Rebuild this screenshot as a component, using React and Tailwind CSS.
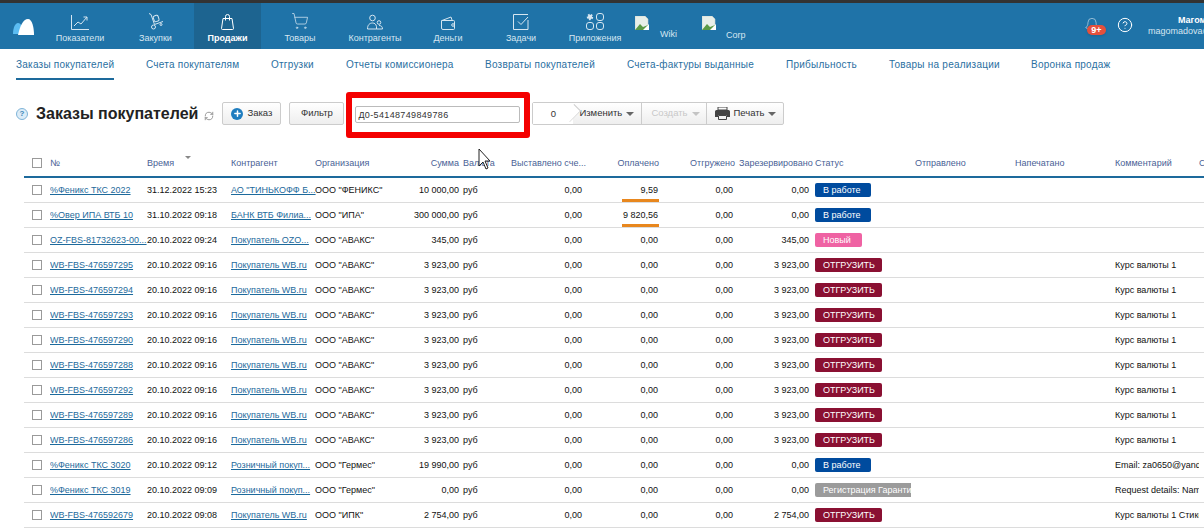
import React from 'react';
import { ShoppingCart, Bell, CircleHelp, Plus, RefreshCw } from 'lucide-react';

function LineChartIcon() {
    return (
        <svg width="18" height="15" viewBox="0 0 18 15" fill="none" stroke="currentColor" strokeWidth="1">
            <path d="M0.5 0v14.5H18" />
            <path d="M3 11l4-4 3 2 6-7" />
            <path d="M12.5 2H16v3.5" />
        </svg>
    );
}

function DollyIcon() {
    return (
        <svg width="16" height="17" viewBox="0 0 16 17" fill="none" stroke="currentColor" strokeWidth="1">
            <path d="M1 0.5l2 1 3.5 10" />
            <rect x="5.5" y="2.5" width="5" height="6" rx="1.5" transform="rotate(-18 8 5)" />
            <path d="M6.5 11.5l8.5-3" />
            <circle cx="5.5" cy="14" r="2" />
            <circle cx="13" cy="11.5" r="1" />
        </svg>
    );
}

function BagIcon() {
    return (
        <svg width="13" height="16" viewBox="0 0 13 16" fill="none" stroke="currentColor" strokeWidth="1">
            <path d="M2 4.500h9l1.500 10a1 1 0 0 1-1 1H1.500a1 1 0 0 1-1-1z" />
            <path d="M4.500 6.500V2.500a2 2 0 0 1 4 0v4" />
        </svg>
    );
}

function PeopleIcon() {
    return (
        <svg width="16" height="16" viewBox="0 0 16 16" fill="none" stroke="currentColor" strokeWidth="1">
            <circle cx="5.500" cy="4" r="2.800" />
            <path d="M0.500 15c0-4 2-6 5-6 2 0 3.500 1 4 3.500V15z" />
            <circle cx="12" cy="8.500" r="1.800" />
            <path d="M9.500 15h6c0-2-1-3.500-3.500-3.500" />
        </svg>
    );
}

function WalletIcon() {
    return (
        <svg width="15" height="14" viewBox="0 0 15 14" fill="none" stroke="currentColor" strokeWidth="1">
            <path d="M1 4.500h11.500a1 1 0 0 1 1 1v7a1 1 0 0 1-1 1h-10.500a1.500 1.500 0 0 1-1.500-1.500V4.500z" />
            <path d="M1 4.500L10 1l1 3" />
            <circle cx="12" cy="9" r="1.300" />
        </svg>
    );
}

function TaskIcon() {
    return (
        <svg width="16" height="16" viewBox="0 0 16 16" fill="none" stroke="currentColor" strokeWidth="1">
            <path d="M15 6v9.500H0.500V0.500H15" />
            <path d="M5 7.500l3 3 7-7.500" />
        </svg>
    );
}

function AppsIcon() {
    return (
        <svg width="18" height="17" viewBox="0 0 18 17" fill="none" stroke="currentColor" strokeWidth="1">
            <circle cx="4" cy="4" r="2.200" fill="currentColor" strokeWidth="2" strokeDasharray="1.500 1" />
            <rect x="10.500" y="0.500" width="7" height="7" rx="2.500" />
            <rect x="0.500" y="9.500" width="7" height="7" rx="2.500" />
            <rect x="10.500" y="9.500" width="7" height="7" rx="2.500" />
        </svg>
    );
}

function PrinterIcon() {
    return (
        <svg width="15" height="13" viewBox="0 0 15 13" className="text-[#444]">
            <path d="M3 0h9v3H3z" fill="none" stroke="currentColor" />
            <path d="M1.500 3h12a1.500 1.500 0 0 1 1.500 1.500V10h-3V8H3v2H0V4.500A1.500 1.500 0 0 1 1.500 3z" fill="currentColor" />
            <path d="M3.500 8.500h8v4h-8z" fill="none" stroke="currentColor" />
        </svg>
    );
}

function BrokenImage() {
    return (
        <svg width="14" height="14" viewBox="0 0 14 14">
            <path d="M0 0h10l3 3v11H0z" fill="#e8efe9" stroke="#c9d2cc" strokeWidth="0.6" />
            <path d="M0 14l5-6 3 3 5-2v5z" fill="#5b9a46" />
            <path d="M8 14l6-6v6z" fill="#fff" />
        </svg>
    );
}

function Logo() {
    return (
        <svg width="21" height="16" viewBox="0 0 21 16" className="mr-[9px]">
            <path d="M0 15c0-6 2-11 5-11s5 4 6 11H0z" fill="#5bbcf2" />
            <path d="M5 16c2-9 5-16 10-16 4 0 6 8 6 16z" fill="#fff" />
        </svg>
    );
}

const navItems = [
    { label: 'Показатели', w: 'w-[74px]', icon: <LineChartIcon /> },
    { label: 'Закупки', w: 'w-[77px]', icon: <DollyIcon /> },
    { label: 'Продажи', w: 'w-[67px]', icon: <BagIcon />, active: true },
    { label: 'Товары', w: 'w-[78px]', icon: <ShoppingCart size={18} strokeWidth={1} /> },
    { label: 'Контрагенты', w: 'w-[72px]', icon: <PeopleIcon /> },
    { label: 'Деньги', w: 'w-[74px]', icon: <WalletIcon /> },
    { label: 'Задачи', w: 'w-[72px]', icon: <TaskIcon /> },
    { label: 'Приложения', w: 'w-[76px]', icon: <AppsIcon /> },
];

const tabs = [
    ['Заказы покупателей', 'w-[130px]'],
    ['Счета покупателям', 'w-[125px]'],
    ['Отгрузки', 'w-[75px]'],
    ['Отчеты комиссионера', 'w-[139px]'],
    ['Возвраты покупателей', 'w-[142px]'],
    ['Счета-фактуры выданные', 'w-[159px]'],
    ['Прибыльность', 'w-[103px]'],
    ['Товары на реализации', 'w-[142px]'],
    ['Воронка продаж', 'w-[100px]'],
];

const badgeStyles = {
    work: 'w-[56px] bg-[#004b9e] rounded-[2px]',
    fresh: 'w-[47px] bg-[#ef62a3] rounded-[2px]',
    ship: 'w-[67px] bg-[#8a1032] rounded-[2px]',
    reg: 'w-[96px] bg-[#9b9b9b] rounded-l-[2px] overflow-hidden',
};

const wbRow = (num, money = '3 923,00', org = 'ООО "АВАКС"', time = '20.10.2022 09:16') => ({
    num, time, client: 'Покупатель WB.ru', org, sum: money, paid: '0,00', res: money,
    status: 'ОТГРУЗИТЬ', kind: 'ship', comment: 'Курс валюты 1',
});

const rows = [
    { num: '%Феникс ТКС 2022', time: '31.12.2022 15:23', client: 'АО "ТИНЬКОФФ Б...', org: 'ООО "ФЕНИКС"', sum: '10 000,00', paid: '9,59', bar: true, res: '0,00', status: 'В работе', kind: 'work' },
    { num: '%Овер ИПА ВТБ 10', time: '31.10.2022 09:18', client: 'БАНК ВТБ Филиа...', org: 'ООО "ИПА"', sum: '300 000,00', paid: '9 820,56', bar: true, res: '0,00', status: 'В работе', kind: 'work' },
    { num: 'OZ-FBS-81732623-00...', time: '20.10.2022 09:24', client: 'Покупатель OZO...', org: 'ООО "АВАКС"', sum: '345,00', paid: '0,00', res: '345,00', status: 'Новый', kind: 'fresh' },
    wbRow('WB-FBS-476597295'),
    wbRow('WB-FBS-476597294'),
    wbRow('WB-FBS-476597293'),
    wbRow('WB-FBS-476597290'),
    wbRow('WB-FBS-476597288'),
    wbRow('WB-FBS-476597292'),
    wbRow('WB-FBS-476597289'),
    wbRow('WB-FBS-476597286'),
    { num: '%Феникс ТКС 3020', time: '20.10.2022 09:12', client: 'Розничный покуп...', org: 'ООО "Гермес"', sum: '19 990,00', paid: '0,00', res: '0,00', status: 'В работе', kind: 'work', comment: 'Email: za0650@yandex.ru' },
    { num: '%Феникс ТКС 3019', time: '20.10.2022 09:09', client: 'Розничный покуп...', org: 'ООО "Гермес"', sum: '0,00', paid: '0,00', res: '0,00', status: 'Регистрация Гарантии', kind: 'reg', comment: 'Request details: Name' },
    { ...wbRow('WB-FBS-476592679', '2 754,00', 'ООО "ИПК"', '20.10.2022 09:08'), comment: 'Курс валюты 1 Стикер' },
];

const th = 'font-normal text-[#4a5f96] text-left p-0 whitespace-nowrap';

function Check() {
    return <span className="block w-[10px] h-[10px] border border-[#9a9a9a] bg-white" />;
}

function Caret({ light }) {
    return <span className={`w-0 h-0 border-x-[4px] border-x-transparent border-t-[4px] ${light ? 'border-t-[#c4c4c4]' : 'border-t-[#666]'}`} />;
}

function OrdersTable() {
    return (
        <table className="table-fixed border-collapse w-[1180px] ml-[24px] mt-[12px] text-[9px] leading-[14px] text-[#111]">
            <colgroup>
                <col className="w-[26px]" /><col className="w-[97px]" /><col className="w-[84px]" /><col className="w-[84px]" />
                <col className="w-[80px]" /><col className="w-[68px]" /><col className="w-[48px]" /><col className="w-[75px]" />
                <col className="w-[76px]" /><col className="w-[77px]" /><col className="w-[76px]" /><col className="w-[100px]" />
                <col className="w-[100px]" /><col className="w-[100px]" /><col className="w-[84px]" /><col />
            </colgroup>
            <thead>
                <tr className="h-[27px] border-b-[2px] border-[#1d6a9c]">
                    <th className="p-0 pl-[8px]"><Check /></th>
                    <th className={th}>№</th>
                    <th className={`${th} relative`}>
                        Время
                        <span className="absolute left-[38px] top-[6px] w-0 h-0 border-x-[3px] border-x-transparent border-t-[3px] border-t-[#888]" />
                    </th>
                    <th className={th}>Контрагент</th>
                    <th className={th}>Организация</th>
                    <th className={`${th} text-right pr-[4px]`}>Сумма</th>
                    <th className={th}>Валюта</th>
                    <th className={`${th} overflow-hidden`}>Выставлено сче...</th>
                    <th className={`${th} text-right pr-[3px]`}>Оплачено</th>
                    <th className={`${th} text-right pr-[4px]`}>Отгружено</th>
                    <th className={`${th} text-right pr-[4px]`}>Зарезервировано</th>
                    <th className={th}>Статус</th>
                    <th className={th}>Отправлено</th>
                    <th className={th}>Напечатано</th>
                    <th className={th}>Комментарий</th>
                    <th className={th}>С</th>
                </tr>
            </thead>
            <tbody>
                {rows.map(row => (
                    <tr key={row.num} className="h-[25px] border-b border-[#dcdcdc]">
                        <td className="p-0 pl-[8px]"><Check /></td>
                        <td className="p-0 overflow-hidden whitespace-nowrap"><span className="text-[#1d6a9c] underline">{row.num}</span></td>
                        <td className="p-0 whitespace-nowrap">{row.time}</td>
                        <td className="p-0 whitespace-nowrap"><span className="text-[#1d6a9c] underline">{row.client}</span></td>
                        <td className="p-0 whitespace-nowrap">{row.org}</td>
                        <td className="p-0 pr-[4px] text-right whitespace-nowrap">{row.sum}</td>
                        <td className="p-0">руб</td>
                        <td className="p-0 pr-[4px] text-right">0,00</td>
                        <td className="p-0 pr-[4px] text-right relative">
                            {row.paid}
                            {row.bar && <span className="absolute right-[3px] bottom-0 w-[37px] h-[3px] bg-[#e8871e]" />}
                        </td>
                        <td className="p-0 pr-[6px] text-right">0,00</td>
                        <td className="p-0 pr-[6px] text-right">{row.res}</td>
                        <td className="p-0">
                            <span className={`block h-[14px] pl-[8px] text-white whitespace-nowrap ${badgeStyles[row.kind]}`}>{row.status}</span>
                        </td>
                        <td className="p-0" />
                        <td className="p-0" />
                        <td className="p-0 overflow-hidden whitespace-nowrap">{row.comment}</td>
                        <td className="p-0" />
                    </tr>
                ))}
            </tbody>
        </table>
    );
}

export default function App() {
    return (
        <div className="relative w-[1204px] h-[530px] overflow-hidden bg-white font-['Liberation_Sans',Arial,sans-serif]">
            <div className="h-[3px] bg-[#333333]" />

            {/* top menu */}
            <div className="h-[46px] bg-[#1f73a8] flex items-stretch pl-[13px] text-[#d6e6f1]">
                <div className="flex items-center pt-[1px]"><Logo /></div>
                <div className="flex text-[9px] leading-[12px]">
                    {navItems.map(item => (
                        <div
                            key={item.label}
                            className={`${item.w} flex flex-col items-center justify-end pb-[5px] ${item.active ? 'bg-[#1d6490] text-white font-bold' : ''}`}
                        >
                            <span className="h-[22px] mb-[2px] flex items-end">{item.icon}</span>
                            {item.label}
                        </div>
                    ))}
                </div>
                <div className="flex text-[9px] ml-[2px]">
                    <div className="w-[67px] flex items-start pt-[13px]">
                        <BrokenImage />
                        <span className="ml-[11px] mt-[12px]">Wiki</span>
                    </div>
                    <div className="flex items-start pt-[13px]">
                        <BrokenImage />
                        <span className="ml-[10px] mt-[13px]">Corp</span>
                    </div>
                </div>
                <div className="ml-auto flex items-center relative w-[120px] shrink-0">
                    <div className="relative w-[33px] -mt-[3px] text-[#c7dcea]">
                        <Bell size={16} strokeWidth={1} />
                        <span className="absolute left-[3px] top-[8px] w-[19px] h-[10px] rounded-full bg-[#e5503c] text-white text-[9px] leading-[10px] font-bold text-center shadow">9+</span>
                    </div>
                    <CircleHelp size={16} strokeWidth={1.5} className="text-white -mt-[3px]" />
                    <div className="ml-[15px] w-[56px] overflow-hidden text-[9px] leading-[11px] text-white whitespace-nowrap">
                        <div className="font-bold pl-[30px]">Магомадова</div>
                        <div className="text-[#d6e6f1]">magomadova@mail.ru</div>
                    </div>
                </div>
            </div>

            {/* sub menu */}
            <div className="h-[31px] flex pl-[16px] text-[10px] tracking-[0.23px] text-[#2a6f9f]">
                {tabs.map(([label, w], i) => (
                    <div key={label} className={`${w} shrink-0 pt-[8px]`}>
                        <span className={`inline-block h-[23px] whitespace-nowrap ${i === 0 ? 'border-b-[2px] border-[#1d6a9c]' : ''}`}>{label}</span>
                    </div>
                ))}
            </div>

            {/* toolbar */}
            <div className="flex items-center h-[46px] mt-[12px] pl-[16px] text-[9.5px] text-[#333]">
                <span className="w-[12px] h-[12px] rounded-full border border-[#7fb4d8] bg-[#dcecf7] text-[#3d86b8] text-[8px] leading-[10px] text-center font-bold -mt-[3px]">?</span>
                <h1 className="ml-[8px] text-[16px] leading-[20px] font-bold text-[#222] whitespace-nowrap -mt-[3px]">Заказы покупателей</h1>
                <RefreshCw size={10} className="ml-[6px] mt-[1px] text-[#888]" />
                <button className="self-start mt-[10px] ml-[8px] w-[59px] h-[23px] flex items-center justify-center gap-[4px] border border-[#ccc] rounded-[2px] bg-gradient-to-b from-white to-[#eeeeee]">
                    <span className="w-[12px] h-[12px] rounded-full bg-[#1f7dbf] flex items-center justify-center">
                        <Plus size={9} strokeWidth={4} className="text-white" />
                    </span>
                    Заказ
                </button>
                <button className="self-start mt-[10px] ml-[8px] w-[55px] h-[23px] border border-[#ccc] rounded-[2px] bg-gradient-to-b from-white to-[#eeeeee]">Фильтр</button>

                <div className="ml-[2px] w-[184px] h-[46px] border-[6px] border-[#f40000] rounded-[3px] flex items-center pl-[3px] bg-white">
                    <input
                        readOnly
                        value="Д0-54148749849786"
                        className="w-[165px] h-[17px] -mt-[1px] px-[2px] border border-[#bbb] rounded-[2px] text-[9px] tracking-[0.35px] text-[#333] outline-none"
                    />
                </div>

                <div className="self-start mt-[10px] ml-[2px] h-[23px] flex border border-[#ccc] rounded-[2px] bg-gradient-to-b from-white to-[#eeeeee]">
                    <div className="relative w-[40px] bg-white text-center leading-[21px]">
                        0
                        <span className="absolute -right-[5px] top-[2px] w-[16px] h-[16px] rotate-45 bg-white border-t border-r border-[#ccc] scale-x-[0.6] -mr-[2px]" />
                    </div>
                    <div className="w-[68px] pl-[6px] flex items-center gap-[4px]">Изменить <Caret /></div>
                    <div className="w-[65px] border-l border-[#ccc] pl-[9px] flex items-center gap-[4px] text-[#c8c8c8]">Создать <Caret light /></div>
                    <div className="w-[77px] border-l border-[#ccc] pl-[8px] flex items-center gap-[3px]">
                        <PrinterIcon /> Печать <Caret />
                    </div>
                </div>
            </div>

            <OrdersTable />

            {/* mouse pointer in the screenshot */}
            <svg className="absolute left-[478px] top-[148px]" width="13" height="22" viewBox="0 0 13 22">
                <path d="M1 1v17l4-4 3 7 2-1-3-7h5z" fill="#fff" stroke="#222" strokeWidth="1" />
            </svg>
        </div>
    );
}
